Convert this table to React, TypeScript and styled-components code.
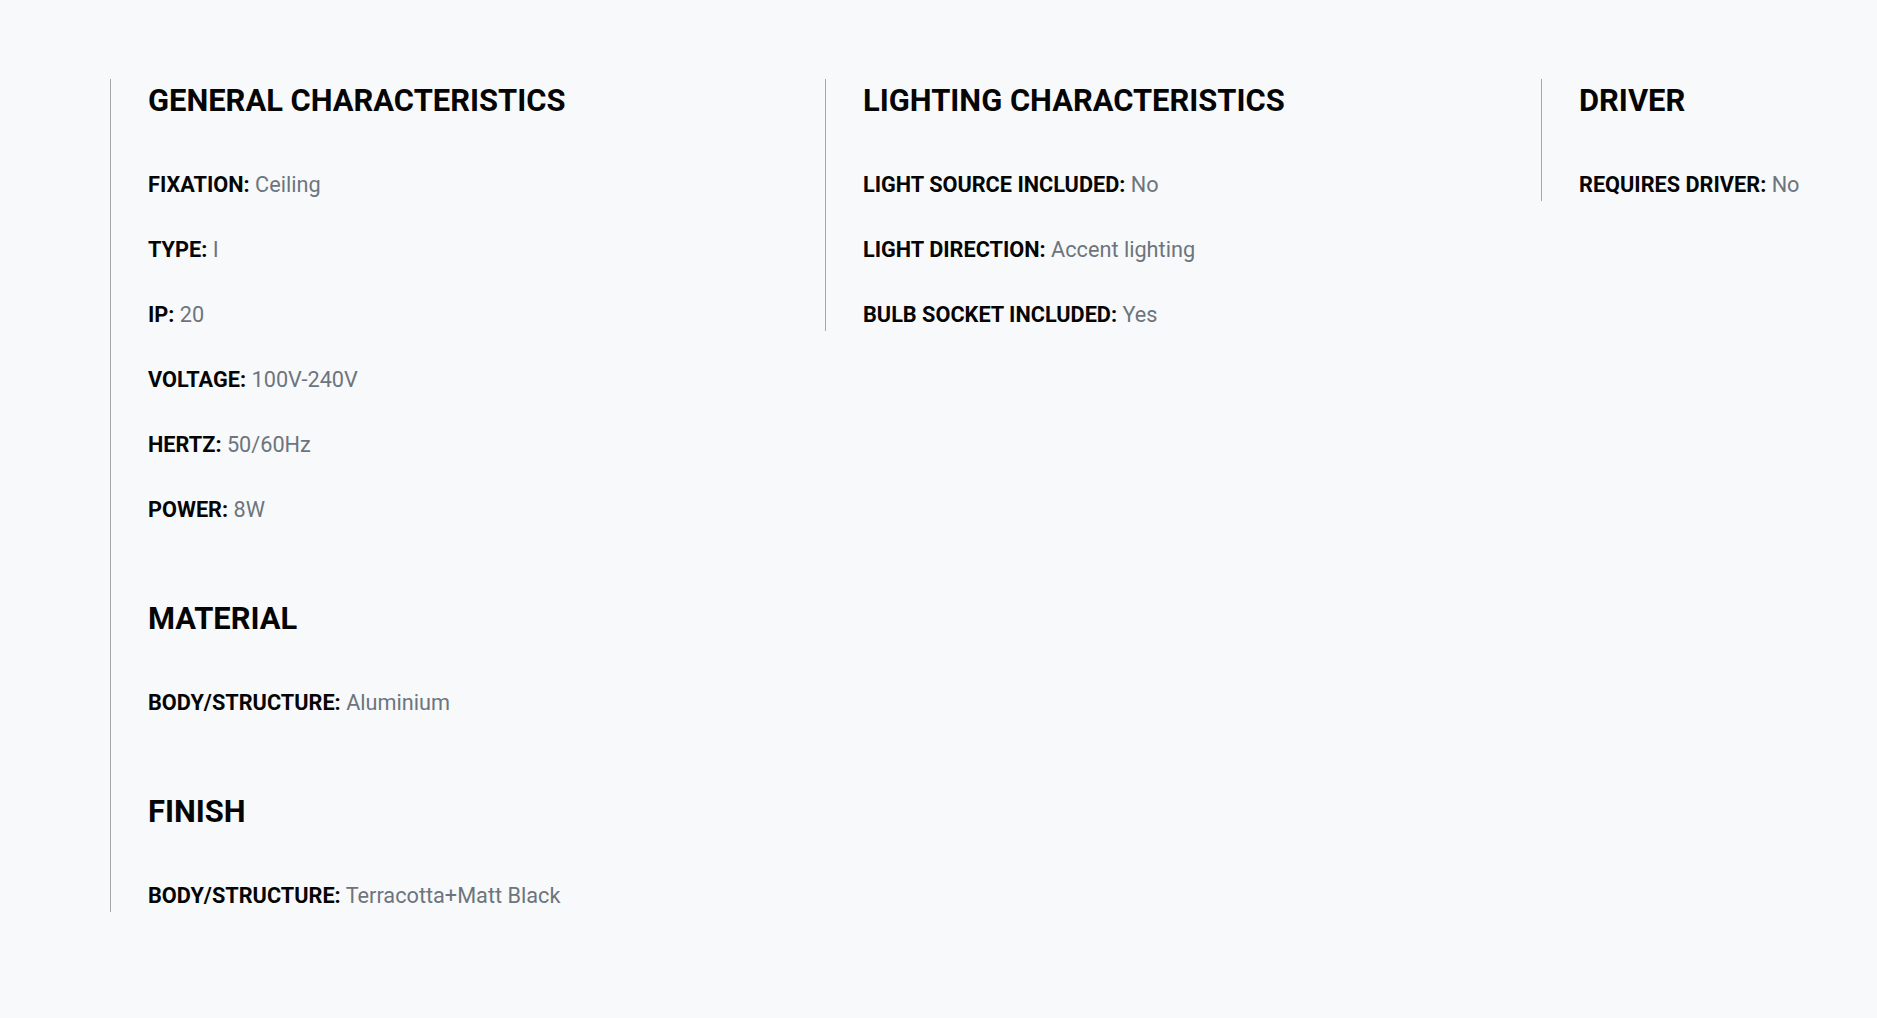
import React from 'react'
import styled, { createGlobalStyle } from 'styled-components'

const GlobalStyle = createGlobalStyle`
    html, body {
        margin: 0;
        padding: 0;
        background: #f8f9fa;
        font-family: Roboto, 'Liberation Sans', sans-serif;
    }
`

// Page layout
const Page = styled.div`
    min-height: 1018px;
    padding: 79px 0 0 110px;
    box-sizing: border-box;
    overflow: hidden;
`

const Columns = styled.div`
    display: grid;
    grid-template-columns: 715px 716px auto;
    align-items: start;
`

const Column = styled.div`
    display: flex;
    flex-direction: column;
    gap: 76px;
    border-left: 1px solid #a6a6a6;
    padding: 4px 0 1px 37px;
`

const Section = styled.section`
    display: flex;
    flex-direction: column;
`

const Heading = styled.h3`
    margin: 0 0 51px;
    font-size: 30.9px;
    line-height: 36px;
    font-weight: 700;
    color: #050505;
    text-transform: uppercase;
`

const Rows = styled.div`
    display: flex;
    flex-direction: column;
    gap: 35px;
`

const Row = styled.p`
    margin: 0;
    font-size: 21.7px;
    line-height: 30px;
    white-space: nowrap;
`

const Label = styled.strong`
    font-weight: 700;
    color: #050505;
`

const Value = styled.span`
    color: #6c757d;
`

type Spec = [string, string]

type Group = {
  title: string
  specs: Spec[]
}

const columns: Group[][] = [
  [
    {
      title: 'General characteristics',
      specs: [
        ['FIXATION', 'Ceiling'],
        ['TYPE', 'I'],
        ['IP', '20'],
        ['VOLTAGE', '100V-240V'],
        ['HERTZ', '50/60Hz'],
        ['POWER', '8W'],
      ],
    },
    { title: 'Material', specs: [['BODY/STRUCTURE', 'Aluminium']] },
    { title: 'Finish', specs: [['BODY/STRUCTURE', 'Terracotta+Matt Black']] },
  ],
  [
    {
      title: 'Lighting characteristics',
      specs: [
        ['LIGHT SOURCE INCLUDED', 'No'],
        ['LIGHT DIRECTION', 'Accent lighting'],
        ['BULB SOCKET INCLUDED', 'Yes'],
      ],
    },
  ],
  [{ title: 'Driver', specs: [['REQUIRES DRIVER', 'No']] }],
]

const App: React.FC = () => {
  return (
    <>
      <GlobalStyle />
      <Page>
        <Columns>
          {columns.map((groups, i) => (
            <Column key={i}>
              {groups.map((group) => (
                <Section key={group.title}>
                  <Heading>{group.title}</Heading>
                  <Rows>
                    {group.specs.map(([label, value]) => (
                      <Row key={label}>
                        <Label>{label}:</Label> <Value>{value}</Value>
                      </Row>
                    ))}
                  </Rows>
                </Section>
              ))}
            </Column>
          ))}
        </Columns>
      </Page>
    </>
  )
}

export default App
